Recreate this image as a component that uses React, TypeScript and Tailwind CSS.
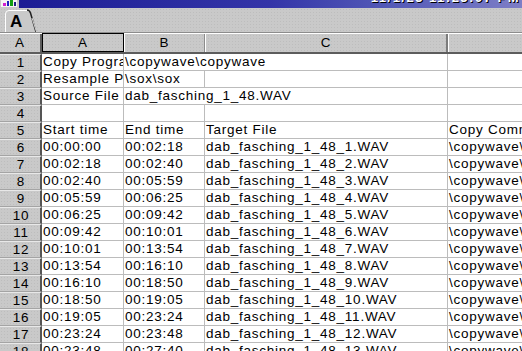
const times = [
  "00:00:00",
  "00:02:18",
  "00:02:40",
  "00:05:59",
  "00:06:25",
  "00:09:42",
  "00:10:01",
  "00:13:54",
  "00:16:10",
  "00:18:50",
  "00:19:05",
  "00:23:24",
  "00:23:48",
  "00:27:40",
];

type Row = { a?: string; b?: string; c?: string; d?: string; span?: boolean };

const rows: Row[] = [
  { a: "Copy Program", b: "\\copywave\\copywave", span: true },
  { a: "Resample Program", b: "\\sox\\sox" },
  { a: "Source File", b: "dab_fasching_1_48.WAV", span: true },
  {},
  { a: "Start time", b: "End time", c: "Target File", d: "Copy Command" },
  ...times.slice(0, 13).map((t, i) => ({
    a: t,
    b: times[i + 1],
    c: `dab_fasching_1_48_${i + 1}.WAV`,
    d: "\\copywave\\copywave.exe",
  })),
];

const grey =
  "bg-[#c9c9c9] bg-[radial-gradient(#bdbdbd_0.6px,transparent_0.8px)] bg-[length:3px_3px]";

function Cell({ w, text }: { w: string; text?: string }) {
  return (
    <div
      className={`${w} shrink-0 h-full border-r border-b border-[#bcbcbc] overflow-hidden whitespace-nowrap pl-[1px] leading-[16px]`}
    >
      {text}
    </div>
  );
}

export default function App() {
  return (
    <div className="w-[522px] h-[351px] overflow-hidden bg-white text-black font-['Liberation_Sans',Arial,sans-serif] text-[13.5px] tracking-[0.75px]">
      {/* window title strip */}
      <div className="flex h-[8px]">
        <div className="w-[19px] bg-[#c8c8c8] flex">
          <svg width="19" height="8" viewBox="0 0 19 8">
            <rect x="1" y="0" width="16" height="7" fill="#f4f4f4" />
            <rect x="3" y="3" width="3" height="3" fill="#d020d0" />
            <rect x="7" y="1" width="2" height="5" fill="#2020c0" />
            <rect x="10" y="0" width="3" height="6" fill="#10a010" />
            <rect x="14" y="2" width="2" height="4" fill="#202080" />
          </svg>
        </div>
        <div className="flex-1 bg-gradient-to-r from-[#1c1c94] via-[#3434a8] to-[#7e7ec6] flex justify-end overflow-hidden">
          <span className="-mt-[9px] pr-[2px] text-white font-bold text-[13px] tracking-[1.5px] leading-[13px] [text-shadow:1px_1px_0_#000]">
            11/1/23 11:23:07 PM
          </span>
        </div>
      </div>

      {/* sheet tabs */}
      <div className={`h-[24px] ${grey} flex`}>
        <svg width="40" height="24" viewBox="0 0 40 24" className="shrink-0">
          <path d="M5 24 V6 Q5 2 9 2 H27 Q29 2 30 5 L36 24 Z" fill="#c9c9c9" />
          <path d="M5.5 24 V6 Q5.5 2.5 9 2.5 H27" stroke="#ffffff" strokeWidth="1" fill="none" />
          <path d="M27 2 Q29.5 2 30.5 5 L36 24" stroke="#202020" strokeWidth="1.5" fill="none" />
          <path d="M32 10 L36.5 24" stroke="#ffffff" strokeWidth="0.8" fill="none" />
          <text
            x="10"
            y="19"
            fontFamily="Liberation Sans, Arial, sans-serif"
            fontWeight="bold"
            fontSize="17"
            fill="#000"
          >
            A
          </text>
        </svg>
      </div>
      <div className="h-px bg-[#8c8c8c]" />
      <div className="h-px bg-white" />

      {/* column headers */}
      <div className={`flex h-[20px] border-b-2 border-[#5c5c5c] ${grey} leading-[18px] text-center`}>
        <div className="w-[42px] shrink-0 border-r-2 border-[#5c5c5c]">A</div>
        <div className="w-[82px] shrink-0 border border-black -mt-[1px] h-[19px]">A</div>
        <div className="w-[81px] shrink-0 border-r border-[#8c8c8c] border-l border-l-white">B</div>
        <div className="w-[243px] shrink-0 border-r-2 border-[#7c7c7c] border-l border-l-white">C</div>
        <div className="flex-1 border-l border-l-white" />
      </div>

      {/* rows */}
      {rows.map((r, i) => (
        <div key={i} className="flex h-[17px]">
          <div
            className={`w-[42px] shrink-0 ${grey} border-r-2 border-r-[#555555] border-t border-t-[#e8e8e8] border-b border-b-[#a4a4a4] text-center leading-[16px] pl-[2px]`}
          >
            {i + 1}
          </div>
          <Cell w="w-[82px]" text={r.a} />
          {r.span ? (
            <Cell w="w-[324px]" text={r.b} />
          ) : (
            <>
              <Cell w="w-[81px]" text={r.b} />
              <Cell w="w-[243px]" text={r.c} />
            </>
          )}
          <Cell w="w-[200px]" text={r.d} />
        </div>
      ))}
    </div>
  );
}
